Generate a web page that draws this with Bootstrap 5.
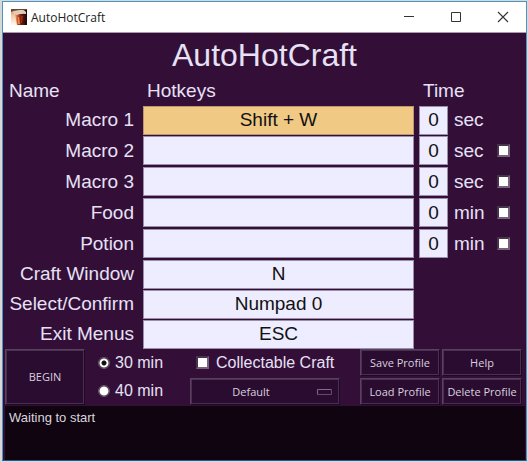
<!DOCTYPE html>
<html lang="en">
<head>
<meta charset="utf-8">
<meta name="viewport" content="width=device-width, initial-scale=1">
<title>AutoHotCraft</title>
<link rel="stylesheet" href="https://cdn.jsdelivr.net/npm/bootstrap@5.3.0/dist/css/bootstrap.min.css">
<style>
  body { background: #d5d9d8; padding: 1px 1px 1px 2px; font-family: "Liberation Sans", Arial, sans-serif; color: #e6e1f5; }
  .app-window { background: #330f38; border: 1px solid #4f93c6; border-bottom-color: #1d5c92; }
  .title-bar { background: #fff; height: 31px; padding: 0 15px 0 8px; color: #222; font: 12px/31px "Open Sans", sans-serif; border-bottom: 1px solid #a99bab; }
  .title-bar button { width: 47px; height: 30px; padding: 0; border: 0; background: none; line-height: 1; }
  .title-bar button:last-child { margin-right: -15px; }
  .heading { font-size: 32px; line-height: 44px; }
  .macro-grid { display: grid; grid-template-columns: 140px minmax(0, 1fr) 5px 29px 6px 43px 14px; padding-right: 15px; font-size: 19px; line-height: 28px; }
  .macro-row { display: grid; grid-template-columns: subgrid; grid-column: 1 / -1; align-items: center; height: 30px; }
  .macro-row.tall { height: 31px; }
  .macro-row.head { height: 28px; }
  .head .name { padding-left: 6px; }
  .head .keys { padding-left: 4px; }
  .row-label { text-align: right; padding-right: 9px; white-space: nowrap; }
  .entry { width: 100%; height: 29px; padding: 0; border: 1px solid #9a8fa8; border-radius: 0; background: #eeecff; color: #111; text-align: center; font-size: 19px; line-height: 27px; }
  .active-entry { background: #f0c985; border-color: #bd9670; }
  .keys { grid-column: 2; }
  .time { grid-column: 4; }
  .unit { grid-column: 6; }
  .toggle { grid-column: 7; }
  .tick { appearance: none; flex: none; margin: 0; width: 13px; height: 13px; border: 2px solid; border-color: #46344a #77627c #77627c #46344a; background: #fff; display: block; }
  .tick:checked { background: #fff linear-gradient(#111, #111) center / 5px 5px no-repeat; }
  .dot { appearance: none; flex: none; margin: 0; width: 12px; height: 12px; border: 1px solid #6b5870; border-radius: 50%; background: radial-gradient(circle, #fff 4px, #433047 5px); }
  .dot:checked { background: radial-gradient(circle, #111 1px, #111 2px, #fff 3px, #fff 4px, #433047 5px); }
  .controls { display: grid; grid-template-columns: 80px 105px minmax(0, 1fr) 162px; padding: 0 4px 0 2px; font-size: 16px; line-height: 27px; }
  .choices { padding-left: 13px; }
  .profile { padding-right: 20px; }
  .choice { display: flex; align-items: center; height: 27px; gap: 5px; white-space: nowrap; }
  .collect { padding-left: 6px; gap: 7px; }
  .tool { background: #2a0c30; color: #d9d0df; border: 2px solid; border-color: #5a4160 #1f0823 #1f0823 #5a4160; outline: 1px solid #49304e; outline-offset: -2px; border-radius: 0; padding: 0; font: 11px/20px "Open Sans", sans-serif; height: 27px; white-space: nowrap; }
  .tool.begin { height: 56px; }
  .picker { appearance: none; text-align: center; text-align-last: center; width: 100%; padding-right: 28px; background: #2a0c30 url("data:image/svg+xml,%3Csvg xmlns='http://www.w3.org/2000/svg' width='15' height='6'%3E%3Cpath d='M.5 5.5V.5h14' fill='none' stroke='%23806b86'/%3E%3Cpath d='M.5 5.5h14V.5' fill='none' stroke='%23624b68'/%3E%3C/svg%3E") right 6px center no-repeat; }
  .buttons { display: grid; grid-template-columns: 1fr 1fr; gap: 2px; }
  .status { background: #0f0410; margin: 1px 1px 0 2px; padding: 0 4px; min-height: 54px; font-size: 13px; line-height: 24px; display: block; color: #d9d4dd; }
</style>
<script src="https://cdn.jsdelivr.net/npm/bootstrap@5.3.0/dist/js/bootstrap.bundle.min.js"></script>
</head>
<body class="min-vh-100 d-flex flex-column">
<main class="app-window flex-grow-1 d-flex flex-column">
  <header class="title-bar d-flex align-items-center">
    <svg width="16" height="16" viewBox="0 0 16 16" aria-hidden="true">
      <defs>
        <linearGradient id="ale" x1="0" x2="1"><stop offset="0" stop-color="#f0b070"/><stop offset=".3" stop-color="#b8452a"/><stop offset=".6" stop-color="#66180e"/><stop offset="1" stop-color="#2a0c08"/></linearGradient>
        <linearGradient id="side" x1="0" x2="0" y1="0" y2="1"><stop offset="0" stop-color="#b98a66"/><stop offset=".4" stop-color="#f2c9a0"/><stop offset="1" stop-color="#fff8f0"/></linearGradient>
      </defs>
      <path d="M0 0h16v16H0z" fill="url(#side)"/>
      <path d="M12 0h4v16h-4z" fill="#1d0c0b"/>
      <path d="M4 5h11l-1 11H6z" fill="url(#ale)"/>
      <path d="M2 3q2-2 6-2 5-1 7 2v2q-5-1-9 1l-3-1z" fill="#e0cdb8"/>
      <path d="M0 0h16v1L8 1 2 2 0 3z" fill="#65473a"/>
      <path d="M7 8h1l1 7H7z" fill="#e98b3d"/>
      <path d="M10 7h2l-1 7h-1z" fill="#a32a12"/>
    </svg>
    <span class="flex-grow-1 ps-1">AutoHotCraft</span>
    <button type="button" aria-label="Minimize"><svg width="12" height="12" viewBox="0 0 12 12"><path d="M1 5.500h10" stroke="#333"/></svg></button>
    <button type="button" aria-label="Maximize"><svg width="12" height="12" viewBox="0 0 12 12"><path d="M1.500 1.500h9v9h-9z" fill="none" stroke="#333"/></svg></button>
    <button type="button" aria-label="Close"><svg width="12" height="12" viewBox="0 0 12 12"><path d="M1 1l10 10M11 1L1 11" stroke="#333" stroke-width="1.100"/></svg></button>
  </header>

  <h1 class="heading fw-normal text-center m-0">AutoHotCraft</h1>

  <section class="macro-grid">
    <div class="macro-row head"><span class="name">Name</span><span class="keys">Hotkeys</span><span class="time ps-1">Time</span></div>
    <div class="macro-row"><label class="row-label" for="m1">Macro 1</label><input class="entry active-entry keys" id="m1" value="Shift + W"><input class="entry time" aria-label="Macro 1 time" value="0"><span class="unit">sec</span></div>
    <div class="macro-row tall"><label class="row-label" for="m2">Macro 2</label><input class="entry keys" id="m2"><input class="entry time" aria-label="Macro 2 time" value="0"><span class="unit">sec</span><input type="checkbox" class="tick toggle" aria-label="Use Macro 2"></div>
    <div class="macro-row tall"><label class="row-label" for="m3">Macro 3</label><input class="entry keys" id="m3"><input class="entry time" aria-label="Macro 3 time" value="0"><span class="unit">sec</span><input type="checkbox" class="tick toggle" aria-label="Use Macro 3"></div>
    <div class="macro-row tall"><label class="row-label" for="food">Food</label><input class="entry keys" id="food"><input class="entry time" aria-label="Food time" value="0"><span class="unit">min</span><input type="checkbox" class="tick toggle" aria-label="Use Food"></div>
    <div class="macro-row tall"><label class="row-label" for="potion">Potion</label><input class="entry keys" id="potion"><input class="entry time" aria-label="Potion time" value="0"><span class="unit">min</span><input type="checkbox" class="tick toggle" aria-label="Use Potion"></div>
    <div class="macro-row"><label class="row-label" for="craft">Craft Window</label><input class="entry keys" id="craft" value="N"></div>
    <div class="macro-row"><label class="row-label" for="confirm">Select/Confirm</label><input class="entry keys" id="confirm" value="Numpad 0"></div>
    <div class="macro-row"><label class="row-label" for="exit">Exit Menus</label><input class="entry keys" id="exit" value="ESC"></div>
  </section>

  <section class="controls">
    <button type="button" class="tool begin">BEGIN</button>
    <div class="choices d-grid">
      <label class="choice"><input type="radio" class="dot" name="span" checked>30 min</label>
      <label class="choice"><input type="radio" class="dot" name="span">40 min</label>
    </div>
    <div class="profile d-flex flex-column justify-content-between">
      <label class="choice collect"><input type="checkbox" class="tick">Collectable Craft</label>
      <select class="tool picker" aria-label="Profile"><option>Default</option></select>
    </div>
    <div class="buttons">
      <button type="button" class="tool">Save Profile</button>
      <button type="button" class="tool">Help</button>
      <button type="button" class="tool">Load Profile</button>
      <button type="button" class="tool">Delete Profile</button>
    </div>
  </section>

  <output class="status flex-grow-1">Waiting to start</output>
</main>
</body>
</html>
